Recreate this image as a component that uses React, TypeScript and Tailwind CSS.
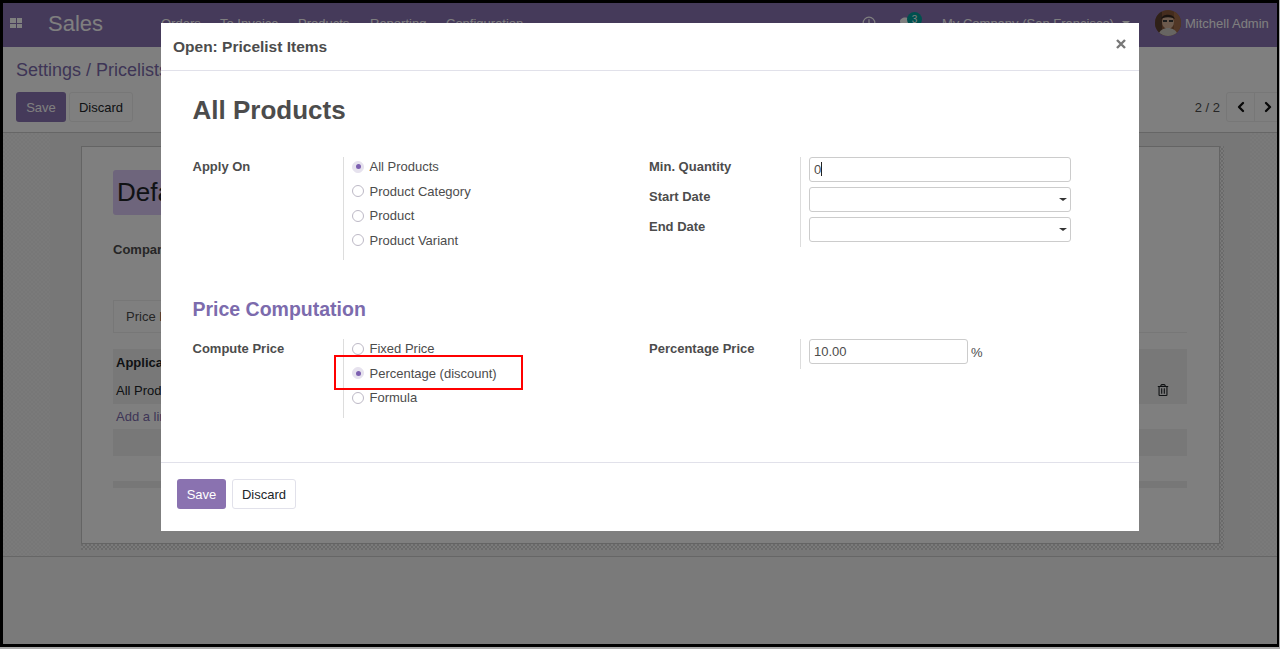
import { Clock, ChevronLeft, ChevronRight } from "lucide-react";
import { FaComments, FaRegTrashAlt } from "react-icons/fa";

const menuItems = [
  { label: "Orders", w: "w-[59px]" },
  { label: "To Invoice", w: "w-[78px]" },
  { label: "Products", w: "w-[72px]" },
  { label: "Reporting", w: "w-[76px]" },
  { label: "Configuration", w: "w-[90px]" },
];

const sideChecker = "bg-[repeating-conic-gradient(#eeeeee_0_25%,#f5f5f5_0_50%)] bg-[length:4px_4px]";
const shadowChecker = "bg-[repeating-conic-gradient(#d4d4d4_0_25%,#f4f4f4_0_50%)] bg-[length:4px_4px]";

function Avatar() {
  return (
    <svg width="26" height="26" viewBox="0 0 26 26" className="rounded-full">
      <rect width="26" height="26" fill="#8a5a3c" />
      <rect x="0" y="0" width="7" height="26" fill="#5d4030" />
      <rect x="19" y="0" width="7" height="26" fill="#a56f4c" />
      <ellipse cx="13" cy="12" rx="6" ry="7" fill="#d9b59a" />
      <path d="M6 9c1-5 12-6 14 0l-2-1c-3-1-7-1-10 0z" fill="#33261f" />
      <rect x="8" y="10" width="4" height="2" fill="#3a3a3a" />
      <rect x="14" y="10" width="4" height="2" fill="#3a3a3a" />
      <path d="M3 26c1-6 6-8 10-8s9 2 10 8z" fill="#cfcac4" />
    </svg>
  );
}

function Navbar() {
  return (
    <div className="flex h-[44px] items-center bg-[#8a74b4] pb-[4px] text-[13px] text-white">
      <div className="ml-[7px] grid h-[10px] w-[12px] grid-cols-2 gap-[1px]">
        <span className="bg-white" />
        <span className="bg-white" />
        <span className="bg-white" />
        <span className="bg-white" />
      </div>
      <span className="ml-[26px] w-[113px] text-[22px]">Sales</span>
      {menuItems.map((m) => (
        <span key={m.label} className={`pt-px ${m.w}`}>
          {m.label}
        </span>
      ))}
      <Clock size={14} className="ml-[326px]" />
      <div className="relative ml-[24px]">
        <FaComments size={14} />
        <span className="absolute -top-[4px] left-[7px] flex h-[15px] w-[15px] items-center justify-center rounded-full bg-[#00a09d] text-[10px]">
          3
        </span>
      </div>
      <span className="ml-[28px] w-[180px] whitespace-nowrap pt-px">My Company (San Francisco)</span>
      <span className="h-0 w-0 border-x-[4px] border-t-[4px] border-x-transparent border-t-white" />
      <div className="ml-[25px] h-[26px] w-[26px]">
        <Avatar />
      </div>
      <span className="ml-[4px] whitespace-nowrap pt-px">Mitchell Admin</span>
    </div>
  );
}

function ControlPanel() {
  return (
    <div className="h-[86px] border-b border-[#ccc] bg-white px-[13px] pt-[10px]">
      <div className="text-[18px] leading-[26px] text-[#7c6bad]">Settings / Pricelists</div>
      <div className="mt-[9px] flex items-center text-[13px]">
        <button className="h-[30px] w-[50px] rounded-[3px] bg-[#8a74b4] pt-px text-white">Save</button>
        <button className="ml-[3px] h-[30px] w-[64px] rounded-[3px] border border-[#eee] bg-white pt-px text-[#212529]">
          Discard
        </button>
        <span className="ml-auto pt-px text-[#4c4c4c]">2 / 2</span>
        <div className="ml-[6px] -mr-[16px] flex h-[30px] w-[54px] items-center rounded-[3px] border border-[#eee] text-[#111]">
          <ChevronLeft size={16} strokeWidth={3.5} className="ml-[6px]" />
          <span className="ml-[5px] h-full border-l border-[#eee]" />
          <ChevronRight size={16} strokeWidth={3.5} className="ml-[5px]" />
        </div>
      </div>
    </div>
  );
}

function Sheet() {
  return (
    <div className="flex h-[423px] bg-[#eeeeee]">
      <div className={`h-full w-[47px] ${sideChecker}`} />
      <div className={`mt-[13px] ml-[31px] h-[404px] w-[1143px] pr-[4px] pb-[6px] ${shadowChecker}`}>
        <div className="h-[398px] w-[1139px] border border-[#c8c8c8] bg-white pt-[23px] pr-[32px] pl-[31px]">
          <div className="h-[45px] w-[300px] rounded-[3px] bg-[#dccaf8] pl-[4px] text-[26px] leading-[45px] text-[#212529]">Default</div>
          <div className="mt-[25px] text-[13px] font-bold text-[#4c4c4c]">Company</div>
          <div className="mt-[40px] border-b border-[#eee]">
            <div className="h-[32px] w-[120px] border border-b-0 border-[#eee] pl-[12px] text-[13px] leading-[32px] text-[#4c4c4c]">
              Price List Items
            </div>
          </div>
          <div className="mt-[16px] h-[55px] bg-[#f1f1f1] px-[3px] text-[13px] text-[#212529]">
            <div className="pt-[4px] font-bold">Applicable On</div>
            <div className="relative mt-[9px]">
              All Products
              <FaRegTrashAlt size={12} className="absolute top-[3px] right-[15px]" />
            </div>
          </div>
          <div className="mt-[3px] pl-[3px] text-[13px] text-[#7c6bad]">Add a line</div>
          <div className="mt-[3px] h-[27px] bg-[#f1f1f1]" />
          <div className="mt-[25px] h-[7px] bg-[#eee]" />
        </div>
      </div>
      <div className={`ml-auto h-full w-[27px] ${sideChecker}`} />
    </div>
  );
}

function Radio({ label, checked }: { label: string; checked?: boolean }) {
  return (
    <div className="flex h-[24.5px] items-center">
      <span
        className={`flex h-[12px] w-[12px] items-center justify-center rounded-full border ${
          checked ? "border-[#e6e2ee] bg-[#e6e2ee]" : "border-[#bdb9c6] bg-white"
        }`}
      >
        {checked && <span className="h-[5px] w-[5px] rounded-full bg-[#7c5fb0]" />}
      </span>
      <span className="ml-[5.5px]">{label}</span>
    </div>
  );
}

function Field({ w = "w-[262px]", value, caret }: { w?: string; value?: string; caret?: boolean }) {
  return (
    <div className={`flex h-[25px] items-center rounded-[3px] border border-[#ccc] bg-white px-[4px] ${w}`}>
      <span>{value}</span>
      {caret && <span className="ml-auto -mr-px h-0 w-0 border-x-[4px] border-t-[3px] border-x-transparent border-t-[#333]" />}
    </div>
  );
}

function Modal() {
  return (
    <div className="relative ml-[158px] mt-[20px] flex h-[508px] w-[978px] flex-col bg-white text-[13px] text-[#4c4c4c]">
      <div className="flex h-[48px] items-center justify-between border-b border-[#e1e1ea] pl-[12px] pr-[13px]">
        <span className="pt-px text-[15.5px] font-bold">Open: Pricelist Items</span>
        <svg width="10" height="10" viewBox="0 0 10 10" className="-mt-[5px]">
          <path d="M1 1l8 8M9 1l-8 8" stroke="#777" strokeWidth="2.4" />
        </svg>
      </div>

      <div className="flex-1 pl-[31.5px]">
        <h1 className="mt-[21px] text-[26px] font-bold leading-[36px]">All Products</h1>

        <div className="mt-[29px] flex h-[103px]">
          <div className="w-[150.5px] font-bold">Apply On</div>
          <div className="h-full w-[306px] border-l border-[#ddd] pl-[8px] leading-none">
            <div className="-mt-[2.5px]">
              <Radio label="All Products" checked />
              <Radio label="Product Category" />
              <Radio label="Product" />
              <Radio label="Product Variant" />
            </div>
          </div>
          <div className="w-[151px] font-bold">
            <div className="h-[30px]">Min. Quantity</div>
            <div className="h-[30px]">Start Date</div>
            <div className="h-[30px]">End Date</div>
          </div>
          <div className="flex h-[90px] flex-col gap-[5px] border-l border-[#ddd] pl-[8px]">
            <Field value="0" />
            <Field caret />
            <Field caret />
          </div>
        </div>

        <h2 className="mt-[35px] text-[19.5px] font-bold leading-[28px] text-[#7c6bad]">Price Computation</h2>

        <div className="mt-[16px] flex h-[79px]">
          <div className="w-[150.5px] font-bold">Compute Price</div>
          <div className="h-full w-[306px] border-l border-[#ddd] pl-[8px] leading-none">
            <div className="-mt-[2.5px]">
              <Radio label="Fixed Price" />
              <Radio label="Percentage (discount)" checked />
              <Radio label="Formula" />
            </div>
          </div>
          <div className="w-[151px] font-bold">Percentage Price</div>
          <div className="flex h-[30px] items-start border-l border-[#ddd] pl-[8px]">
            <Field w="w-[159px]" value="10.00" />
            <span className="ml-[3px] mt-[4px]">%</span>
          </div>
        </div>
      </div>

      <div className="flex h-[69px] items-start gap-[6px] border-t border-[#e1e1ea] pl-[16px] pt-[16px]">
        <button className="h-[30px] w-[49px] rounded-[3px] bg-[#8a72b0] pt-px text-white">Save</button>
        <button className="h-[30px] w-[64px] rounded-[3px] border border-[#e1e1ea] bg-white pt-px text-[#212529]">Discard</button>
      </div>

      {/* cursor in the quantity field */}
      <span className="absolute left-[660px] top-[139px] h-[14px] w-px bg-[#222]" />
      {/* annotation box */}
      <div className="absolute left-[173px] top-[332px] h-[35px] w-[189px] border-2 border-[#f00]" />
    </div>
  );
}

export default function App() {
  return (
    <div className="h-[649px] w-[1280px] overflow-hidden bg-[#aaa] font-['Liberation_Sans',Arial,sans-serif]">
      <div className="relative h-[647px] w-[1279px] overflow-hidden border-y-[3px] border-r-[2px] border-l-[3px] border-black bg-[#f5f5f5]">
        <Navbar />
        <ControlPanel />
        <Sheet />
        <div className="border-t border-[#ccc]" />
        <div className="absolute inset-0 bg-black/50">
          <Modal />
        </div>
      </div>
    </div>
  );
}
